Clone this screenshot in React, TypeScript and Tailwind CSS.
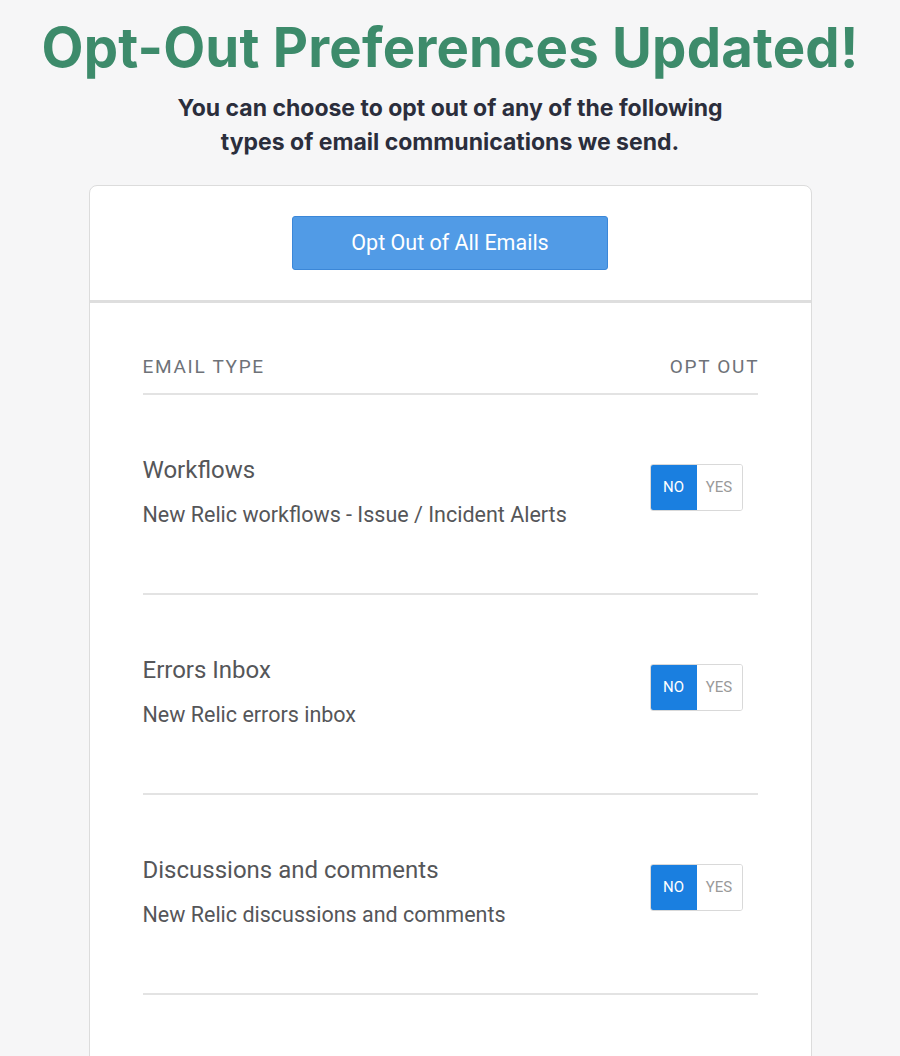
const rows = [
  {
    title: "Workflows",
    desc: "New Relic workflows - Issue / Incident Alerts",
  },
  {
    title: "Errors Inbox",
    desc: "New Relic errors inbox",
  },
  {
    title: "Discussions and comments",
    desc: "New Relic discussions and comments",
  },
];

function Toggle() {
  return (
    <div className="flex h-[47px] w-[93px] overflow-hidden rounded-[3px] border border-[#d9d9d9] text-[15px]">
      <span className="flex w-[46px] items-center justify-center bg-[#1a7fe0] text-white">
        NO
      </span>
      <span className="flex flex-1 items-center justify-center bg-white text-[#9a9a9a]">
        YES
      </span>
    </div>
  );
}

export default function App() {
  return (
    <div className="min-h-[1056px] bg-[#f6f6f7] pt-[14px] font-['Roboto',sans-serif]">
      <h1 className="text-center font-['Inter',sans-serif] text-[54.5px] font-bold leading-[66px] tracking-[0.2px] text-[#3d8b6b]">
        Opt-Out Preferences Updated!
      </h1>
      <p className="mx-auto mt-[11px] w-[640px] text-center font-['Inter',sans-serif] text-[23px] font-bold leading-[34px] text-[#2b2e3c]">
        You can choose to opt out of any of the following
        <br />
        types of email communications we send.
      </p>

      <div className="mx-auto mt-[26px] w-[723px] rounded-t-[8px] border border-[#dcdcdc] bg-white">
        <div className="flex justify-center border-b-[3px] border-[#dedede] pb-[30px] pt-[30px]">
          <button className="h-[54px] w-[316px] rounded-[3px] border border-[#3b87d8] bg-[#519be6] text-[21.5px] text-white">
            Opt Out of All Emails
          </button>
        </div>

        <div className="px-[53px]">
          <div className="flex justify-between border-b-2 border-[#e3e3e3] pb-[14px] pt-[52px] text-[19px] leading-[24px] tracking-[1.7px] text-[#6e7278]">
            <span>EMAIL TYPE</span>
            <span className="-mr-[1.7px]">OPT OUT</span>
          </div>

          {rows.map((r) => (
            <div
              key={r.title}
              className="flex justify-between border-b-2 border-[#e3e3e3] pb-[64px] pt-[60px]"
            >
              <div>
                <div className="text-[24px] leading-[30px] text-[#555659]">
                  {r.title}
                </div>
                <div className="mt-[16px] text-[21.5px] leading-[28px] text-[#555659]">
                  {r.desc}
                </div>
              </div>
              <div className="mr-[15px] mt-[9px]">
                <Toggle />
              </div>
            </div>
          ))}
          <div className="h-[80px]" />
        </div>
      </div>
    </div>
  );
}
